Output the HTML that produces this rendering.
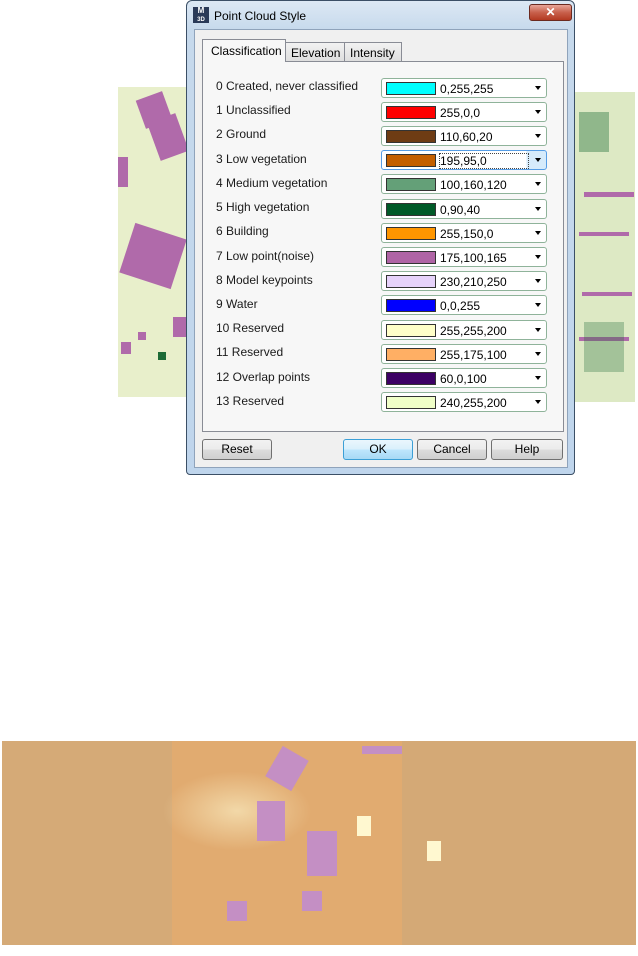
<!DOCTYPE html>
<html><head><meta charset="utf-8"><style>
*{margin:0;padding:0;box-sizing:border-box}
body{width:638px;height:956px;background:#fff;position:relative;overflow:hidden;font-family:"Liberation Sans",sans-serif;font-size:12px;color:#000}
.abs{position:absolute}
.blob{position:absolute;background:#b06aaa}
.g{position:absolute;background:#1d6b36}
.row{position:absolute;left:216px;font-size:12px;color:#1a1a1a}
.cb{position:absolute;left:381px;width:166px;height:20px;border:1px solid #8fb39a;border-radius:3px;background:#fff}
.cb .sw{position:absolute;left:4px;top:3px;width:50px;height:13px;border:1px solid #333}
.cb .t{position:absolute;left:58px;top:3px;font-size:12px}
.cb .ar{position:absolute;right:5px;top:7px;width:0;height:0;border-left:3px solid transparent;border-right:3px solid transparent;border-top:4px solid #000}
.btn{position:absolute;top:439px;height:21px;border:1px solid #707070;border-radius:3px;background:linear-gradient(#f2f2f2 0,#ebebeb 50%,#dcdcdc 51%,#cfcfcf 100%);text-align:center;line-height:19px;font-size:12px}
</style></head><body>
<!-- left image -->
<div class="abs" style="left:118px;top:87px;width:70px;height:310px;background:#e8efcb">
 <div class="blob" style="left:22px;top:8px;width:28px;height:30px;transform:rotate(-20deg)"></div>
 <div class="blob" style="left:35px;top:30px;width:30px;height:40px;transform:rotate(-20deg)"></div>
 <div class="blob" style="left:0;top:70px;width:10px;height:30px"></div>
 <div class="blob" style="left:8px;top:143px;width:54px;height:52px;transform:rotate(18deg)"></div>
 <div class="blob" style="left:55px;top:230px;width:15px;height:20px"></div>
 <div class="blob" style="left:20px;top:245px;width:8px;height:8px"></div>
 <div class="blob" style="left:3px;top:255px;width:10px;height:12px"></div>
 <div class="g" style="left:40px;top:265px;width:8px;height:8px"></div>
</div>
<!-- right image -->
<div class="abs" style="left:574px;top:92px;width:61px;height:310px;background:#dde9c4">
 <div class="blob" style="left:10px;top:100px;width:50px;height:5px"></div>
 <div class="blob" style="left:5px;top:140px;width:50px;height:4px"></div>
 <div class="blob" style="left:8px;top:200px;width:50px;height:4px"></div>
 <div class="blob" style="left:5px;top:245px;width:50px;height:4px"></div>
 <div class="g" style="left:5px;top:20px;width:30px;height:40px;opacity:.4"></div>
 <div class="g" style="left:10px;top:230px;width:40px;height:50px;opacity:.3"></div>
</div>
<!-- bottom image -->
<div class="abs" style="left:2px;top:741px;width:634px;height:204px;background:#e1ab70">
 <div class="abs" style="left:0;top:0;width:170px;height:204px;background:#cdaa7c;opacity:.6"></div>
 <div class="abs" style="left:400px;top:0;width:234px;height:204px;background:#c7a87c;opacity:.5"></div>
 <div class="abs" style="left:160px;top:30px;width:150px;height:80px;background:radial-gradient(#f2d8a8,rgba(242,216,168,0) 70%)"></div>
 <div class="blob" style="left:255px;top:60px;width:28px;height:40px;background:#c48fc4"></div>
 <div class="blob" style="left:305px;top:90px;width:30px;height:45px;background:#c48fc4"></div>
 <div class="blob" style="left:270px;top:10px;width:30px;height:35px;background:#c48fc4;transform:rotate(30deg)"></div>
 <div class="blob" style="left:300px;top:150px;width:20px;height:20px;background:#c48fc4"></div>
 <div class="blob" style="left:225px;top:160px;width:20px;height:20px;background:#c48fc4"></div>
 <div class="blob" style="left:360px;top:5px;width:40px;height:8px;background:#c48fc4"></div>
 <div class="abs" style="left:355px;top:75px;width:14px;height:20px;background:#fff8d0"></div>
 <div class="abs" style="left:425px;top:100px;width:14px;height:20px;background:#fff8d0"></div>
</div>
<!-- dialog frame -->
<div class="abs" style="left:186px;top:0;width:389px;height:475px;border:1px solid #3b4f66;border-radius:6px 6px 4px 4px;background:linear-gradient(180deg,#dce8f4 0,#c6d9ec 30px,#bfd5ec 100%)"></div>
<div class="abs" style="left:194px;top:29px;width:374px;height:439px;background:#f0f0f0;border:1px solid #8fa3bb"></div>
<!-- title -->
<div class="abs" style="left:193px;top:7px;width:16px;height:16px;background:#2a3a58;color:#fff;font-size:8px;font-weight:bold;line-height:8px;text-align:center">M<br><span style="font-size:6px">3D</span></div>
<div class="abs" style="left:214px;top:9px;font-size:12px;color:#000">Point Cloud Style</div>
<div class="abs" style="left:529px;top:4px;width:43px;height:17px;border:1px solid #6b2a20;border-radius:3px;background:linear-gradient(#e8a598,#c8604c 50%,#b33a22);color:#fff;text-align:center;font-weight:bold;font-size:12px;line-height:15px">✕</div>
<!-- tabs -->
<div class="abs" style="left:202px;top:61px;width:362px;height:371px;border:1px solid #898c95;background:#f7f7f7"></div>
<div class="abs" style="left:285px;top:42px;width:60px;height:20px;border:1px solid #898c95;background:linear-gradient(#f2f2f2,#dedede);font-size:12px;padding:3px 0 0 5px">Elevation</div>
<div class="abs" style="left:344px;top:42px;width:58px;height:20px;border:1px solid #898c95;background:linear-gradient(#f2f2f2,#dedede);font-size:12px;padding:3px 0 0 5px">Intensity</div>
<div class="abs" style="left:202px;top:39px;width:84px;height:23px;border:1px solid #898c95;border-bottom:none;background:#f7f7f7;font-size:12px;padding:4px 0 0 8px">Classification</div>

<div class="row" style="top:79px">0 Created, never classified</div>
<div class="cb" style="top:78px"><div class="sw" style="background:#00ffff"></div><div class="t">0,255,255</div><div class="ar"></div></div>
<div class="row" style="top:103px">1 Unclassified</div>
<div class="cb" style="top:102px"><div class="sw" style="background:#ff0000"></div><div class="t">255,0,0</div><div class="ar"></div></div>
<div class="row" style="top:127px">2 Ground</div>
<div class="cb" style="top:126px"><div class="sw" style="background:#6e3c14"></div><div class="t">110,60,20</div><div class="ar"></div></div>
<div class="row" style="top:152px">3 Low vegetation</div>
<div class="cb" style="top:150px;border-color:#569de5;background:linear-gradient(90deg,#fff 0,#fff 88%,#d6ebfb 88%)"><div class="sw" style="background:#c35f00"></div><div class="t" style="outline:1px dotted #444;width:88px">195,95,0</div><div class="ar"></div></div>
<div class="row" style="top:176px">4 Medium vegetation</div>
<div class="cb" style="top:174px"><div class="sw" style="background:#64a078"></div><div class="t">100,160,120</div><div class="ar"></div></div>
<div class="row" style="top:200px">5 High vegetation</div>
<div class="cb" style="top:199px"><div class="sw" style="background:#005a28"></div><div class="t">0,90,40</div><div class="ar"></div></div>
<div class="row" style="top:224px">6 Building</div>
<div class="cb" style="top:223px"><div class="sw" style="background:#ff9600"></div><div class="t">255,150,0</div><div class="ar"></div></div>
<div class="row" style="top:249px">7 Low point(noise)</div>
<div class="cb" style="top:247px"><div class="sw" style="background:#af64a5"></div><div class="t">175,100,165</div><div class="ar"></div></div>
<div class="row" style="top:273px">8 Model keypoints</div>
<div class="cb" style="top:271px"><div class="sw" style="background:#e6d2fa"></div><div class="t">230,210,250</div><div class="ar"></div></div>
<div class="row" style="top:297px">9 Water</div>
<div class="cb" style="top:295px"><div class="sw" style="background:#0000ff"></div><div class="t">0,0,255</div><div class="ar"></div></div>
<div class="row" style="top:321px">10 Reserved</div>
<div class="cb" style="top:320px"><div class="sw" style="background:#ffffc8"></div><div class="t">255,255,200</div><div class="ar"></div></div>
<div class="row" style="top:345px">11 Reserved</div>
<div class="cb" style="top:344px"><div class="sw" style="background:#ffaf64"></div><div class="t">255,175,100</div><div class="ar"></div></div>
<div class="row" style="top:370px">12 Overlap points</div>
<div class="cb" style="top:368px"><div class="sw" style="background:#3c0064"></div><div class="t">60,0,100</div><div class="ar"></div></div>
<div class="row" style="top:394px">13 Reserved</div>
<div class="cb" style="top:392px"><div class="sw" style="background:#f0ffc8"></div><div class="t">240,255,200</div><div class="ar"></div></div>

<div class="btn" style="left:202px;width:70px">Reset</div>
<div class="btn" style="left:343px;width:70px;border-color:#3c9fd6;background:linear-gradient(#eaf6fd,#d9f0fc 50%,#bee6fd 51%,#a7d9f5)">OK</div>
<div class="btn" style="left:417px;width:70px">Cancel</div>
<div class="btn" style="left:491px;width:72px">Help</div>
</body></html>
